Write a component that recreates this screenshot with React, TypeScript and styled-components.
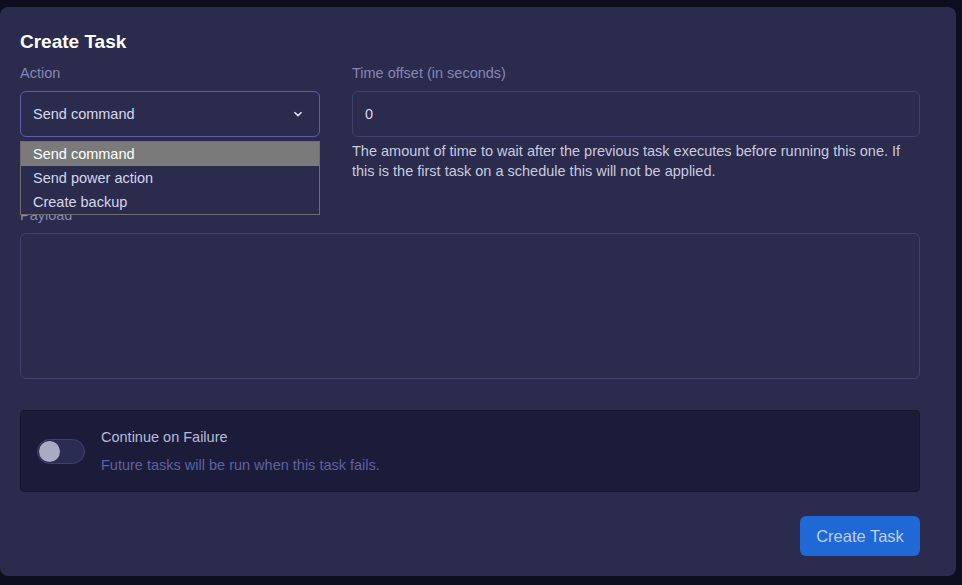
import React, { useState } from 'react';
import styled, { createGlobalStyle } from 'styled-components';

const GlobalStyle = createGlobalStyle`
  html, body {
    margin: 0;
    padding: 0;
    background: #0c0d1f;
  }
  body {
    font-family: 'Liberation Sans', Arial, sans-serif;
  }
`;

const Page = styled.div`
  padding-top: 7px;
  height: 585px;
  box-sizing: border-box;
`;

const Panel = styled.div`
  width: 956px;
  height: 569px;
  box-sizing: border-box;
  background: #2a2b4d;
  border-radius: 8px;
  padding: 24px 36px 20px 20px;
  display: flex;
  flex-direction: column;
`;

const Title = styled.h2`
  margin: 0;
  font-size: 19px;
  line-height: 22px;
  font-weight: 700;
  color: #ffffff;
`;

const Grid = styled.div`
  display: grid;
  grid-template-columns: 300px 1fr;
  column-gap: 32px;
  align-items: start;
  margin-top: 10px;
`;

const Field = styled.div`
  display: flex;
  flex-direction: column;
`;

const Label = styled.label`
  font-size: 14.5px;
  line-height: 20px;
  color: #8587b6;
  margin-bottom: 8px;
`;

const SelectWrap = styled.div`
  position: relative;
`;

const SelectBox = styled.div`
  height: 46px;
  box-sizing: border-box;
  border: 1px solid #5d5fa6;
  border-radius: 6px;
  padding: 0 16px 0 12px;
  display: flex;
  align-items: center;
  justify-content: space-between;
  font-size: 14.5px;
  color: #d8d9ee;
  cursor: pointer;
`;

const OptionList = styled.ul`
  position: absolute;
  top: 100%;
  left: 0;
  right: 0;
  margin: 4px 0 0;
  padding: 0;
  list-style: none;
  background: #2a2b4d;
  border: 1px solid #6e6e6e;
  z-index: 10;
`;

const OptionItem = styled.li<{ $active?: boolean }>`
  height: 24px;
  line-height: 24px;
  padding-left: 12px;
  font-size: 14.5px;
  color: ${(p) => (p.$active ? '#ffffff' : '#d4d6ee')};
  background: ${(p) => (p.$active ? '#7a7a7a' : 'transparent')};
`;

const Input = styled.div`
  height: 46px;
  box-sizing: border-box;
  border: 1px solid #3f416c;
  border-radius: 6px;
  padding: 0 12px;
  display: flex;
  align-items: center;
  font-size: 14.5px;
  color: #d8d9ee;
`;

const Help = styled.p`
  margin: 4px 0 0;
  font-size: 14.5px;
  line-height: 20px;
  color: #c9cadf;
`;

const PayloadField = styled(Field)`
  margin-top: 24px;
`;

const TextArea = styled.div`
  height: 146px;
  box-sizing: border-box;
  border: 1px solid #3f416c;
  border-radius: 6px;
`;

const FailureBox = styled.div`
  margin-top: 31px;
  height: 82px;
  box-sizing: border-box;
  background: #1b1c3a;
  border: 1px solid #17182f;
  border-radius: 4px;
  padding: 0 16px;
  display: flex;
  align-items: center;
  gap: 16px;
`;

const Toggle = styled.div`
  width: 48px;
  height: 25px;
  box-sizing: border-box;
  border: 1px solid #3e4070;
  border-radius: 13px;
  background: #2b2c52;
  display: flex;
  align-items: center;
  padding: 0 1px;
`;

const Knob = styled.span`
  width: 21px;
  height: 21px;
  border-radius: 50%;
  background: #a9aac4;
`;

const FailureText = styled.div`
  display: flex;
  flex-direction: column;
  gap: 8px;
`;

const FailureTitle = styled.span`
  font-size: 14.5px;
  line-height: 20px;
  color: #b9bad8;
`;

const FailureHint = styled.span`
  font-size: 14.5px;
  line-height: 20px;
  color: #5f61a0;
`;

const Footer = styled.div`
  margin-top: 24px;
  display: flex;
  justify-content: flex-end;
`;

const Button = styled.button`
  width: 120px;
  height: 40px;
  border: none;
  border-radius: 6px;
  background: #2068d6;
  color: #bcd0f2;
  font-family: inherit;
  font-size: 16.5px;
  cursor: pointer;
`;

const options = ['Send command', 'Send power action', 'Create backup'];

export default function App() {
  const [selected] = useState('Send command');

  return (
    <>
      <GlobalStyle />
      <Page>
        <Panel>
          <Title>Create Task</Title>
          <Grid>
            <Field>
              <Label>Action</Label>
              <SelectWrap>
                <SelectBox>
                  {selected}
                  <svg width="10" height="6" viewBox="0 0 10 6">
                    <path d="M1.5 1.2 5 4.6 8.5 1.2" fill="none" stroke="#e4e5f5" strokeWidth="1.6" />
                  </svg>
                </SelectBox>
                <OptionList>
                  {options.map((o) => (
                    <OptionItem key={o} $active={o === selected}>
                      {o}
                    </OptionItem>
                  ))}
                </OptionList>
              </SelectWrap>
            </Field>
            <Field>
              <Label>Time offset (in seconds)</Label>
              <Input>0</Input>
              <Help>
                The amount of time to wait after the previous task executes before running this one. If
                this is the first task on a schedule this will not be applied.
              </Help>
            </Field>
          </Grid>
          <PayloadField>
            <Label>Payload</Label>
            <TextArea />
          </PayloadField>
          <FailureBox>
            <Toggle>
              <Knob />
            </Toggle>
            <FailureText>
              <FailureTitle>Continue on Failure</FailureTitle>
              <FailureHint>Future tasks will be run when this task fails.</FailureHint>
            </FailureText>
          </FailureBox>
          <Footer>
            <Button>Create Task</Button>
          </Footer>
        </Panel>
      </Page>
    </>
  );
}
